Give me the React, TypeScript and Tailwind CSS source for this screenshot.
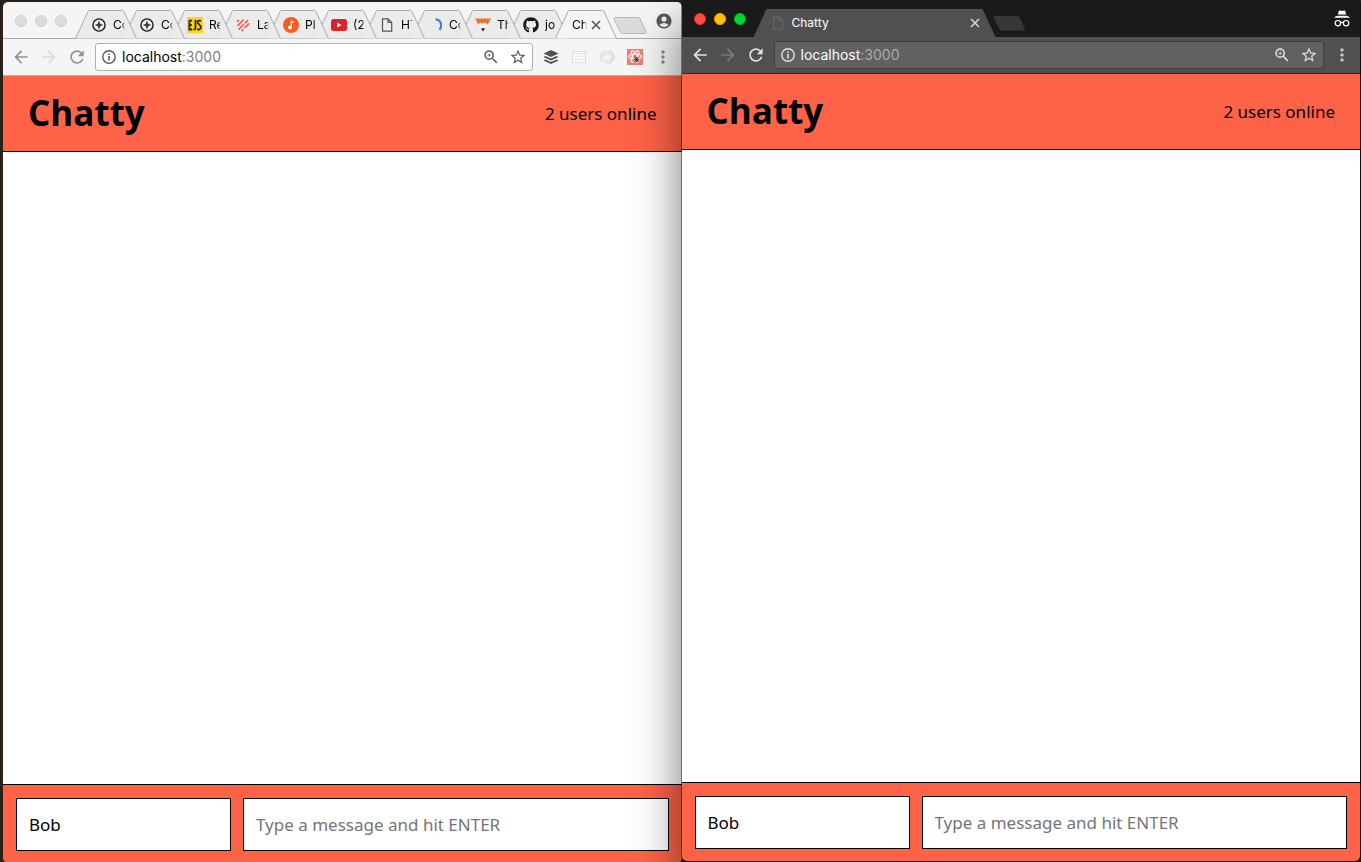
import React from "react";
import {
  MdArrowBack,
  MdArrowForward,
  MdRefresh,
  MdZoomIn,
  MdStarBorder,
  MdMoreVert,
  MdAccountCircle,
} from "react-icons/md";
import { FaGithub } from "react-icons/fa";

/* ---------- Favicons ---------- */

function CircleStarIcon() {
  return (
    <svg viewBox="0 0 14 14" className="size-[14px]" aria-hidden="true">
      <circle cx="7" cy="7" r="6.1" fill="none" stroke="#1c1c1c" strokeWidth="1.4" />
      <path d="M7 2.6 8.1 5.9 11.4 7 8.1 8.1 7 11.4 5.9 8.1 2.6 7 5.9 5.9Z" fill="#1c1c1c" />
      <circle cx="7" cy="7" r="0.8" fill="#777" />
    </svg>
  );
}

function EjsIcon() {
  return (
    <span className="flex h-4 w-4 items-center justify-center bg-[#fdd31c]">
      <svg viewBox="0 0 16 16" className="size-4" aria-hidden="true">
        <g fill="none" stroke="#2b2612" strokeWidth="1.8">
          <path d="M5.2 3.6H2.4v8.9h2.8M2.4 8h2.4" />
          <path d="M8.5 2.7v8.6c0 1-.8 1.3-2 1.2" />
          <path d="M14 3.9c-2.6-.9-3.6.2-3.3 1.8.3 1.5 3.2 2.4 3.2 4.4 0 2.2-1.7 2.9-3.8 2.1" />
        </g>
      </svg>
    </span>
  );
}

function StripesIcon() {
  return (
    <svg viewBox="0 0 14 14" className="size-[14px]" aria-hidden="true">
      <g stroke="#f4645f" strokeWidth="1.8" strokeLinecap="round" fill="none">
        <path d="M1.400 3.400 2.400 2.400" />
        <path d="M2 7.400 7.200 2.200" />
        <path d="M3 11.200 7.400 6.800M9.400 4.800 11.600 2.600" />
        <path d="M6 12.600 7 11.600M9.200 9.400 12.600 6" />
      </g>
    </svg>
  );
}

function MusicIcon() {
  return (
    <svg viewBox="0 0 16 16" className="size-4" aria-hidden="true">
      <circle cx="8" cy="8" r="8" fill="#fc5a22" />
      <path d="M7.6 3.5 10.7 4.2V6L8.9 5.7V10.6A1.9 1.8 0 1 1 7.6 8.9Z" fill="#fff" />
    </svg>
  );
}

function VideoIcon() {
  return (
    <svg viewBox="0 0 16 12" className="h-3 w-4" aria-hidden="true">
      <rect width="16" height="12" rx="2.5" fill="#d9252a" />
      <path d="M6.3 3.5v5l4.3-2.5Z" fill="#fff" />
    </svg>
  );
}

function PageIcon() {
  return (
    <svg viewBox="0 0 12 14" className="h-[14px] w-3" aria-hidden="true">
      <path d="M1.5.8H7l3.7 3.7v8.7H1.5ZM7 .8v3.7h3.7" fill="none" stroke="currentColor" strokeWidth="1.2" />
    </svg>
  );
}

function SpinnerIcon() {
  return (
    <svg viewBox="0 0 14 14" className="size-[14px]" aria-hidden="true">
      <path d="M7.5 1.300A6 6 0 0 1 11.400 11.600" fill="none" stroke="#3c7fe0" strokeWidth="2.200" />
    </svg>
  );
}

function FoxIcon() {
  return (
    <svg viewBox="0 0 16 14" className="h-[14px] w-4" aria-hidden="true">
      <path d="M0 .5h16L12.5 7h-9Z" fill="#f0703a" />
      <path d="M3.2 7 5.3 4.6 6.5 6 8 4.6 9.5 6 10.7 4.6 12.8 7 9.8 11.2H6.2Z" fill="#fff" />
      <path d="M6 10.3h4L8 13.4Z" fill="#222" />
    </svg>
  );
}

/* ---------- Interface icons ---------- */

function CloseIcon() {
  return (
    <svg viewBox="0 0 10 10" className="size-[10px]" aria-hidden="true">
      <path d="m1 1 8 8m0-8L1 9" fill="none" stroke="currentColor" strokeWidth="1.7" />
    </svg>
  );
}

function InfoIcon() {
  return (
    <svg viewBox="0 0 14 14" className="size-[14px]" aria-hidden="true">
      <circle cx="7" cy="7" r="6.2" fill="none" stroke="currentColor" strokeWidth="1.4" />
      <path d="M6.2 6.1h1.6v4.4H6.2ZM6.2 3.4h1.6V5H6.2Z" fill="currentColor" />
    </svg>
  );
}

function LayersIcon() {
  return (
    <svg viewBox="0 0 16 16" className="size-4" aria-hidden="true">
      <g fill="#4d5154">
        <path d="M8 1 15.5 4.5 8 8 .5 4.5Z" />
        <path d="M2.4 7 .5 8 8 11.5 15.5 8l-1.900-1L8 9.600Z" />
        <path d="M2.4 10.5.5 11.5 8 15l7.500-3.500-1.900-1L8 13.100Z" />
      </g>
    </svg>
  );
}

function CardIcon() {
  return (
    <svg viewBox="0 0 16 14" className="h-[14px] w-4" aria-hidden="true">
      <rect x="1.5" y="1.5" width="13" height="11" fill="#fafafa" stroke="#dedede" />
      <path d="M1.5 3.5h13" stroke="#e2e2e2" />
      <path d="M4 6.5h8M4 9.5h8" stroke="#e6e6e6" />
    </svg>
  );
}

function SwirlIcon() {
  return (
    <svg viewBox="0 0 16 16" className="size-4" aria-hidden="true">
      <circle cx="8" cy="8" r="5.300" fill="none" stroke="#e5e5e5" strokeWidth="4.400" />
      <path d="M7 15.200C2.800 11.500 3.500 5 9.500 1" fill="none" stroke="#f8f8f8" strokeWidth="1.200" />
      <path d="M10.500 1.300C16 3.500 16.500 10.500 11.500 13.800M5 7.500C5 5.800 6.500 4.700 8 4.700" fill="none" stroke="#cfcfcf" />
    </svg>
  );
}

function AtomIcon() {
  return (
    <svg viewBox="0 0 16 16" className="size-4" aria-hidden="true">
      <rect width="16" height="16" fill="#f0806d" />
      <g fill="none" stroke="#fff" strokeWidth="1.1">
        <ellipse cx="8" cy="7.5" rx="6.300" ry="2.500" />
        <ellipse cx="8" cy="7.5" rx="6.300" ry="2.500" transform="rotate(60 8 7.5)" />
        <ellipse cx="8" cy="7.5" rx="6.300" ry="2.500" transform="rotate(120 8 7.5)" />
      </g>
      <ellipse cx="9.5" cy="10.5" rx="2" ry="2.6" fill="#5b4a4a" />
      <path d="m7 8 5 5m0-5-5 5m-.5-2.500h6" stroke="#5b4a4a" strokeWidth=".8" />
    </svg>
  );
}

function IncognitoIcon() {
  return (
    <svg viewBox="0 0 16 18" className="h-[18px] w-4" aria-hidden="true">
      <path d="M4.700 1.200C5 .4 5.500.3 6.100.6 7.500 1.200 8.500 1.200 9.900.6c.6-.3 1.100-.2 1.400.6L12.200 4.500H3.800Z" fill="#fff" />
      <path d="M0 7.700C1 6.600 2.300 6.200 3.600 5.700h8.800c1.300.5 2.600.9 3.600 2Z" fill="#fff" />
      <g fill="none" stroke="#fff" strokeWidth="1.2">
        <circle cx="3.9" cy="13.2" r="2.7" />
        <circle cx="12.1" cy="13.2" r="2.7" />
        <path d="M6.6 12.8c.8-.6 2-.6 2.8 0" />
      </g>
    </svg>
  );
}

/* ---------- Browser parts ---------- */

function WindowLights({ colors }: { colors: string[] }) {
  return (
    <div className="flex gap-2">
      {colors.map((color, i) => (
        <button
          key={i}
          type="button"
          aria-label={["Close window", "Minimise window", "Zoom window"][i]}
          className={`size-3 rounded-full border ${color}`}
        />
      ))}
    </div>
  );
}

const tabs = [
  { icon: <CircleStarIcon />, label: "Co" },
  { icon: <CircleStarIcon />, label: "Co" },
  { icon: <EjsIcon />, label: "Re" },
  { icon: <StripesIcon />, label: "La" },
  { icon: <MusicIcon />, label: "Pl" },
  { icon: <VideoIcon />, label: "(2" },
  { icon: <PageIcon />, label: "HT" },
  { icon: <SpinnerIcon />, label: "Co" },
  { icon: <FoxIcon />, label: "Th" },
  { icon: <FaGithub className="size-4 text-[#15181c]" />, label: "jo" },
];

const stack = ["z-10", "z-9", "z-8", "z-7", "z-6", "z-5", "z-4", "z-3", "z-2", "z-1"];

function TabShape({ fill }: { fill: string }) {
  return (
    <svg viewBox="0 0 62 29" className="absolute inset-0 h-[29px] w-[62px]" aria-hidden="true">
      <path d="M.5 28.5 13 1.5Q13.5.5 14.5.5H47.5Q48.5.5 49 1.5L61.5 28.5" fill={fill} stroke="#a9a9a9" />
    </svg>
  );
}

function LightTabStrip() {
  return (
    <div className="relative flex h-[37px] items-end border-b border-[#a9a9a9] bg-[#f5f5f5] pl-3">
      <div className="mb-[11px] mr-2">
        <WindowLights
          colors={["bg-[#dcdcdc] border-[#cfcfcf]", "bg-[#dcdcdc] border-[#cfcfcf]", "bg-[#dcdcdc] border-[#cfcfcf]"]}
        />
      </div>
      <div className="isolate -mb-px flex">
        {tabs.map((tab, i) => (
          <button
            key={i}
            type="button"
            className={`relative -mr-[14px] flex h-[29px] w-[62px] items-center gap-[6px] pl-4 text-left text-xs text-black ${stack[i]}`}
          >
            <TabShape fill="#ebebeb" />
            <span className="relative flex w-4 justify-center text-[#555]">{tab.icon}</span>
            <span className="relative w-3 overflow-hidden whitespace-nowrap [mask-image:linear-gradient(to_right,black_75%,transparent)]">
              {tab.label}
            </span>
          </button>
        ))}
        <div className="relative z-20 flex h-[29px] w-[62px] items-center gap-1 pl-[17px] text-xs text-black">
          <TabShape fill="#f5f5f5" />
          <span className="relative w-[15px] overflow-hidden whitespace-nowrap [mask-image:linear-gradient(to_right,black_75%,transparent)]">
            Chatty
          </span>
          <button type="button" aria-label="Close tab" className="relative text-[#5a5a5a]">
            <CloseIcon />
          </button>
        </div>
      </div>
      <button type="button" aria-label="New tab" className="-ml-1 mb-1">
        <svg viewBox="0 0 34 17" className="h-[17px] w-[34px]" aria-hidden="true">
          <path d="M2.5.5H25Q26.5.5 27.2 2L33 14.5Q33.5 16.5 31.5 16.5H9.5Q8.2 16.5 7.5 15L1.2 2.5Q.5.5 2.5.5Z" fill="#dcdcdc" stroke="#b5b5b5" />
        </svg>
      </button>
      <button type="button" aria-label="Profile" className="mb-2 ml-auto mr-[9px] text-[#5a5a5a]">
        <MdAccountCircle className="size-[18px]" />
      </button>
    </div>
  );
}

function DarkTabStrip() {
  return (
    <div className="flex h-[37px] items-end bg-[#1a1a1a] pl-3">
      <div className="mb-3 mr-2">
        <WindowLights
          colors={["bg-[#ff4b47] border-[#e8302c]", "bg-[#ffc000] border-[#e8ac00]", "bg-[#00d62f] border-[#00b824]"]}
        />
      </div>
      <div className="flex h-7 w-[242px] items-center bg-[#505050] pl-[18px] pr-4 text-xs text-white [clip-path:polygon(13px_0,calc(100%-13px)_0,100%_100%,0_100%)]">
        <span className="text-[#676767]">
          <PageIcon />
        </span>
        <span className="ml-2 flex-1">Chatty</span>
        <button type="button" aria-label="Close tab" className="text-[#d0d0d0]">
          <CloseIcon />
        </button>
      </div>
      <button type="button" aria-label="New tab" className="-ml-[3px] mb-[6px]">
        <svg viewBox="0 0 32 15" className="h-[15px] w-8" aria-hidden="true">
          <path d="M1.5 0H24.5Q26 0 26.7 1.5L32 13Q32 14.5 30.5 14.5H8.5Q7 14.5 6.3 13L.7 1.5Q.5 0 1.5 0Z" fill="#373737" />
        </svg>
      </button>
      <span className="mb-[9px] ml-auto mr-[10px]">
        <IncognitoIcon />
      </span>
    </div>
  );
}

function Toolbar({ dark = false }: { dark?: boolean }) {
  return (
    <div
      className={
        dark
          ? "flex h-[37px] items-center border-b border-[#2b2b2b] bg-[#505050] pl-2 pr-2 text-[#e2e2e2]"
          : "flex h-[37px] items-center border-b border-[#b4b4b4] bg-[#f5f5f5] pl-2 pr-[9px] text-[#5a5a5a]"
      }
    >
      <div className="flex gap-2">
        <button type="button" aria-label="Back" className={dark ? "" : "text-[#929292]"}>
          <MdArrowBack className="size-5" />
        </button>
        <button type="button" aria-label="Forward" className={dark ? "text-[#7a7a7a]" : "text-[#dcdcdc]"}>
          <MdArrowForward className="size-5" />
        </button>
        <button type="button" aria-label="Reload" className={dark ? "" : "text-[#929292]"}>
          <MdRefresh className="size-5" />
        </button>
      </div>
      <div
        className={
          dark
            ? "ml-2 flex h-7 flex-1 items-center rounded-[3px] border border-[#3e3e3e] bg-[#616161] pl-[6px] pr-[5px]"
            : "ml-2 flex h-7 flex-1 items-center rounded-[3px] border border-[#b0b0b0] bg-white pl-[6px] pr-[5px]"
        }
      >
        <InfoIcon />
        <a href="#localhost" className={`ml-[6px] flex-1 text-sm ${dark ? "text-white" : "text-black"}`}>
          localhost<span className={dark ? "text-[#a9a9a9]" : "text-[#808080]"}>:3000</span>
        </a>
        <button type="button" aria-label="Zoom">
          <MdZoomIn className="size-[18px]" />
        </button>
        <button type="button" aria-label="Bookmark" className="ml-[9px]">
          <MdStarBorder className="size-[18px]" />
        </button>
      </div>
      {!dark && (
        <div className="ml-[10px] flex items-center gap-3">
          <button type="button" aria-label="Buffer"><LayersIcon /></button>
          <button type="button" aria-label="Notes"><CardIcon /></button>
          <button type="button" aria-label="Swirl"><SwirlIcon /></button>
          <button type="button" aria-label="React tools"><AtomIcon /></button>
        </div>
      )}
      <button type="button" aria-label="Menu" className={dark ? "ml-2" : "ml-[10px]"}>
        <MdMoreVert className={dark ? "size-5 text-[#c8c8c8]" : "size-5 text-[#868686]"} />
      </button>
    </div>
  );
}

/* ---------- Chat application ---------- */

function ChatApp({ id }: { id: string }) {
  const field =
    "h-[53px] min-w-0 border border-black bg-white px-3 text-[17px] text-black outline-none placeholder:text-[#757575]";
  return (
    <div className="flex min-h-0 flex-1 flex-col font-['Noto_Sans','Open_Sans',sans-serif]">
      <header className="flex h-[76px] shrink-0 items-center justify-between border-b border-black bg-[#ff6347] px-[25px] text-black">
        <h1 className="font-['Open_Sans','Noto_Sans',sans-serif] text-[35px] font-bold">Chatty</h1>
        <span className="text-[17px]">2 users online</span>
      </header>
      <main className="min-h-0 flex-1 bg-white" />
      <footer className="flex shrink-0 gap-3 border-t border-black bg-[#ff6347] px-[13px] pb-3 pt-[13px]">
        <input id={`${id}-name`} aria-label="Your name" defaultValue="Bob" className={`${field} w-[215px]`} />
        <input
          id={`${id}-message`}
          aria-label="Message"
          placeholder="Type a message and hit ENTER"
          className={`${field} flex-1`}
        />
      </footer>
    </div>
  );
}

export default function App() {
  return (
    <div className="flex h-screen overflow-hidden bg-[#2b211b] pl-[3px] pr-px font-['Inter','Roboto',sans-serif]">
      <section className="-mb-px mt-[2px] flex min-w-0 flex-1 flex-col overflow-hidden rounded-[5px]">
        <LightTabStrip />
        <Toolbar />
        <ChatApp id="left" />
      </section>
      <section className="relative z-30 mb-px flex min-w-0 flex-1 flex-col rounded-[5px] shadow-[0_0_0_1px_rgba(0,0,0,0.4),0_24px_48px_rgba(0,0,0,0.55)]">
        <div className="flex min-h-0 flex-1 flex-col overflow-hidden rounded-[5px]">
          <DarkTabStrip />
          <Toolbar dark />
          <ChatApp id="right" />
        </div>
      </section>
    </div>
  );
}
